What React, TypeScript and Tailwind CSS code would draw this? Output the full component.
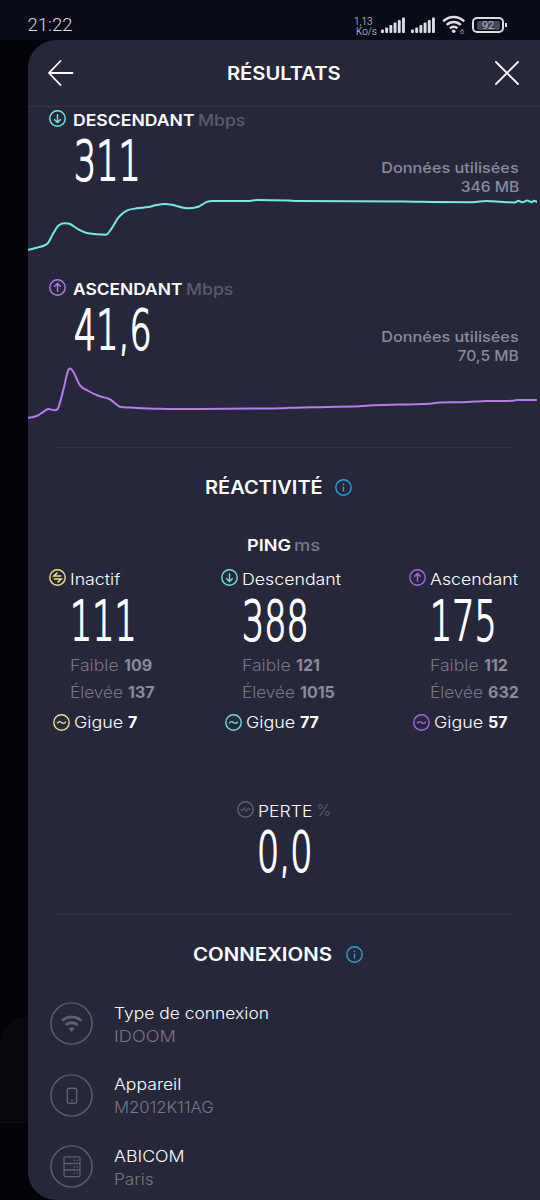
import type { ReactNode } from "react";

type Point = [number, number];

const downloadPoints: Point[] = [
  [27.7, 249.7], [36.7, 247.7], [47.3, 243.7], [53.3, 233.3], [58.3, 225.7],
  [64.3, 223.3], [70, 224], [78.3, 229.3], [88.3, 233.3], [106, 234.7],
  [111.7, 228.3], [118.3, 217.7], [126.7, 210.7], [136.7, 208.3], [148.3, 207],
  [156.7, 205], [165, 204], [171.7, 204.7], [187.3, 208.3], [198.3, 206.7],
  [206.7, 201.9], [213, 200.9], [248, 201], [257, 199.9], [288, 200.4],
  [297, 201.1], [403, 201.4], [437, 202], [473, 202.3], [486, 200.9],
  [503, 202.1], [515, 202.4], [518.3, 200.8], [522.7, 202.3], [527.3, 200.5],
  [531.7, 202.2], [534, 200.8], [537, 201.7],
];

const uploadPoints: Point[] = [
  [27.7, 417.7], [36.7, 416], [42.7, 412.3], [48.3, 409], [55, 410.3],
  [58.3, 407.7], [63.3, 390], [67.7, 371.7], [70, 368.4], [73.3, 371.7],
  [80, 385.3], [88.3, 391], [98.3, 395.7], [109.3, 399], [115, 403.3],
  [120, 406.8], [130, 407.5], [160, 408.7], [200, 409], [270, 408.4],
  [283, 408.2], [290, 407.7], [313, 407.3], [360, 406.3], [373, 405.3],
  [430, 403.7], [440, 402.5], [463, 402.2], [487, 401], [513, 400.8],
  [517, 399.9], [537, 399.9],
];

function smoothPath(points: Point[]) {
  const slope = points.map(([x, y], i) => {
    const prev = points[i - 1];
    const next = points[i + 1];
    if (!prev || !next) return 0;
    if ((y - prev[1]) * (next[1] - y) <= 0) return 0;
    return (next[1] - prev[1]) / (next[0] - prev[0]);
  });
  let d = `M${points[0][0]} ${points[0][1]}`;
  for (let i = 1; i < points.length; i++) {
    const [x0, y0] = points[i - 1];
    const [x1, y1] = points[i];
    const dx = (x1 - x0) / 3;
    d += `C${x0 + dx} ${y0 + dx * slope[i - 1]} ${x1 - dx} ${y1 - dx * slope[i]} ${x1} ${y1}`;
  }
  return d;
}

const glyphs = {
  down: <path d="M8.5 4.3v8M5.2 9.2l3.3 3.3 3.3-3.3" />,
  up: <path d="M8.5 12.7v-8M5.2 7.8l3.3-3.3 3.3 3.3" />,
  idle: <path d="M8.4 3.6L4.8 7h7.4M8.6 13.4L12.2 10H4.8" strokeWidth={1.5} />,
  jitter: <path d="M4.3 9.4c1-2.2 2.7-2.2 4.2-.9s3.2 1.3 4.2-.9" />,
  loss: <path d="M3.5 8.8h3.2l1.2-2.6M9 10.8l1.2-2.6h3.3" strokeWidth={1.3} />,
  info: <path d="M8.5 7.5v5M8.5 4.5v1.6" />,
};

function RoundIcon({ glyph, className }: { glyph: keyof typeof glyphs; className: string }) {
  return (
    <svg viewBox="0 0 17 17" fill="none" stroke="currentColor" strokeWidth={1.4} className={`h-[17px] w-[17px] shrink-0 ${className}`}>
      <circle cx="8.5" cy="8.5" r="7.7" />
      {glyphs[glyph]}
    </svg>
  );
}

// Widened lettering: className carries the horizontal scale and the width it takes up
function Wide({ className, children }: { className: string; children: ReactNode }) {
  return <span className={`inline-block origin-left whitespace-pre ${className}`}>{children}</span>;
}

function BigNumber({ children }: { children: ReactNode }) {
  return (
    <div className="origin-left scale-x-[0.623] whitespace-nowrap font-['DejaVu_Sans',sans-serif] text-[56px] font-extralight leading-[54px] [-webkit-text-stroke:1.8px_white]">
      {children}
    </div>
  );
}

function StatusBar() {
  const bars = [3.5, 5.5, 8, 10.5, 13, 15.5];
  const signal = (
    <svg viewBox="0 0 24 16" className="h-4 w-6 fill-[#dcdce2]">
      {bars.map((h, i) => (
        <rect key={i} x={i * 4.2} y={16 - h} width="2.9" height={h} rx="0.9" />
      ))}
    </svg>
  );
  return (
    <div className="flex h-10 items-start bg-[#090b19] font-['Roboto',sans-serif] text-[#dcdce2]">
      <div className="ml-[27.5px] mt-[14px] flex-1 text-[18.5px] leading-[22px]">21:22</div>
      <div className="mr-[4px] mt-[17px] w-[23px] text-[10px] leading-[9.5px]">
        <div>1,13</div>
        <div className="pl-[2px]">Ko/s</div>
      </div>
      <div className="mr-px mt-[17px] flex gap-[6px]">
        {signal}
        {signal}
      </div>
      <svg viewBox="0 0 24 20" className="ml-[6px] mt-[15px] h-5 w-6" fill="none" stroke="#dcdce2" strokeWidth={2.5}>
        <path d="M1.2 6.3a14.8 14.8 0 0 1 21 0M4.7 10a9.8 9.8 0 0 1 14 0M8 13.4a5.2 5.2 0 0 1 7.4 0" />
        <circle cx="11.7" cy="16.3" r="1.8" fill="#dcdce2" stroke="none" />
        <text x="18" y="18.8" fill="#dcdce2" stroke="none" className="text-[8px]">6</text>
      </svg>
      <div className="ml-[6px] mt-[17px] flex h-[16px] w-[32px] items-center justify-center rounded-[5px] border-2 border-[#dcdce2]">
        <div className="flex h-[9px] w-[23px] items-center justify-center rounded-[2px] bg-[#46485a] text-[11px] leading-[11px]">92</div>
      </div>
      <div className="ml-px mr-[33px] mt-[23px] h-1 w-[2px] bg-[#dcdce2]" />
    </div>
  );
}

type SpeedProps = {
  glyph: "down" | "up";
  color: string;
  label: ReactNode;
  value: string;
  data: string;
  points: Point[];
  viewBox: string;
};

function SpeedSection({ glyph, color, label, value, data, points, viewBox }: SpeedProps) {
  return (
    <section className={color}>
      <div className="flex h-[27px] items-center pb-px pl-[21px]">
        <RoundIcon glyph={glyph} className="-mt-[3px] mr-[6.5px]" />
        {label}
        <Wide className="w-[46px] scale-x-[1.1] font-medium text-[#5b5c6d]">Mbps</Wide>
      </div>
      <div className="flex h-[62px] justify-between pl-[45.5px] pr-[21px] text-white">
        <BigNumber>{value}</BigNumber>
        <div className="flex flex-col items-end self-end text-[14.5px] font-medium leading-[18.5px] text-[#8a8b9e]">
          <span className="origin-right scale-x-[1.12]">Données utilisées</span>
          <span className="origin-right scale-x-[1.08]">{data}</span>
        </div>
      </div>
      <svg viewBox={viewBox} className="block h-[60px] w-[512px]" fill="none" stroke="currentColor" strokeWidth={2} strokeLinejoin="round">
        <path d={smoothPath(points)} />
      </svg>
    </section>
  );
}

type PingProps = {
  glyph: "idle" | "down" | "up";
  color: string;
  label: string;
  value: string;
  low: string;
  high: string;
  jitter: string;
};

function PingColumn({ glyph, color, label, value, low, high, jitter }: PingProps) {
  return (
    <div>
      <div className="flex h-[30px] items-center">
        <RoundIcon glyph={glyph} className={`-mt-1 mr-[4px] ${color}`} />
        <Wide className="scale-x-[1.11]">{label}</Wide>
      </div>
      <div className="ml-[21px] h-[58px] w-20">
        <BigNumber>{value}</BigNumber>
      </div>
      <div className="ml-[21px] leading-[27px] text-[#77788b]">
        <div className="flex">
          <Wide className="w-[54px] scale-x-[1.1]">Faible </Wide>
          <b className="text-[#8a8b9e]">{low}</b>
        </div>
        <div className="flex">
          <Wide className="w-[58px] scale-x-[1.07]">Élevée </Wide>
          <b className="text-[#8a8b9e]">{high}</b>
        </div>
      </div>
      <div className="flex h-8 items-center pl-[4px]">
        <RoundIcon glyph="jitter" className={`mr-[3.5px] ${color}`} />
        <Wide className="w-[54.5px] scale-x-[1.12]">Gigue </Wide>
        <b>{jitter}</b>
      </div>
    </div>
  );
}

type ConnectionProps = { icon: ReactNode; title: string; detail: string; titleScale: string; detailScale: string };

function Connection({ icon, title, detail, titleScale, detailScale }: ConnectionProps) {
  return (
    <div className="flex h-[71.5px] items-center pl-[22px]">
      <svg viewBox="0 0 43 43" className="h-[43px] w-[43px] text-[#5f6073]" fill="none" stroke="currentColor" strokeWidth={1.4}>
        <circle cx="21.5" cy="21.5" r="20.6" />
        {icon}
      </svg>
      <div className="ml-[21px] flex flex-col items-start pt-[2px] leading-[23px]">
        <Wide className={titleScale}>{title}</Wide>
        <Wide className={`text-[#77788b] ${detailScale}`}>{detail}</Wide>
      </div>
    </div>
  );
}

export default function App() {
  return (
    <div className="h-[1200px] w-[540px] overflow-hidden bg-[#020308] font-['Inter',sans-serif] text-base font-[350] text-white">
      <StatusBar />
      <div className="flex h-[1160px]">
        <div className="w-[28px] shrink-0 overflow-hidden pl-px pt-[976px]">
          <div className="h-[107px] w-20 rounded-tl-[28px] border border-[#0d0e15] bg-[#07080e]" />
        </div>
        <main className="w-[512px] overflow-hidden rounded-l-[28px] bg-[#26273a]">
          <header className="flex h-[67px] items-center border-b border-[#32334a] pl-[20px] pr-[21px]">
            <svg viewBox="0 0 26 26" className="h-[26px] w-[26px]" fill="none" stroke="white" strokeWidth={1.8} strokeLinecap="round">
              <path d="M12.5 1L1 13l11.5 12M1 13h23.5" />
            </svg>
            <h1 className="flex-1 pr-[2px] text-center text-[18px] font-semibold">
              <span className="inline-block scale-x-[1.12]">RÉSULTATS</span>
            </h1>
            <svg viewBox="0 0 24 24" className="h-6 w-6" fill="none" stroke="white" strokeWidth={1.8} strokeLinecap="round">
              <path d="M1 1l22 22M23 1L1 23" />
            </svg>
          </header>

          <SpeedSection
            glyph="down"
            color="text-[#72ebe6]"
            label={<Wide className="w-[125px] scale-x-[1.1] font-semibold text-white">DESCENDANT</Wide>}
            value="311"
            data="346 MB"
            points={downloadPoints}
            viewBox="28 196 512 60"
          />
          <div className="h-5" />
          <SpeedSection
            glyph="up"
            color="text-[#b87cf0]"
            label={<Wide className="w-[113px] scale-x-[1.085] font-semibold text-white">ASCENDANT</Wide>}
            value="41,6"
            data="70,5 MB"
            points={uploadPoints}
            viewBox="28 365 512 60"
          />

          <hr className="ml-[26px] mr-[28px] mt-[22px] border-[#303146]" />
          <h2 className="flex h-[79px] items-center pl-[176.5px] text-[18px] font-semibold">
            <Wide className="w-[130.5px] scale-x-[1.11]">RÉACTIVITÉ</Wide>
            <RoundIcon glyph="info" className="text-[#2fa0dc]" />
          </h2>
          <div className="flex h-[37px] items-center pb-[2px] pl-[219px]">
            <Wide className="w-[46.5px] scale-x-[1.13] font-semibold">PING</Wide>
            <Wide className="scale-x-[1.15] font-medium text-[#77788b]">ms</Wide>
          </div>
          <div className="grid grid-cols-[172px_188px_1fr] pl-[21px]">
            <PingColumn glyph="idle" color="text-[#eee087]" label="Inactif" value="111" low="109" high="137" jitter="7" />
            <PingColumn glyph="down" color="text-[#66e3de]" label="Descendant" value="388" low="121" high="1015" jitter="77" />
            <PingColumn glyph="up" color="text-[#a868dd]" label="Ascendant" value="175" low="112" high="632" jitter="57" />
          </div>

          <div className="mt-[57px] pl-[209px]">
            <div className="flex h-8 items-center">
              <RoundIcon glyph="loss" className="-mt-1 mr-[3.5px] text-[#5f6073]" />
              <Wide className="w-[59px] scale-x-[1.1]">PERTE</Wide>
              <span className="text-[15.5px] text-[#5f6073]">%</span>
            </div>
            <div className="-mt-[2px] ml-[20px] h-[51px] w-20">
              <BigNumber>0,0</BigNumber>
            </div>
          </div>

          <hr className="ml-[26px] mr-[28px] mt-[38px] border-[#303146]" />
          <h2 className="flex h-[73px] items-center pl-[165px] pt-[6px] text-[18px] font-semibold">
            <Wide className="w-[153px] scale-x-[1.135]">CONNEXIONS</Wide>
            <RoundIcon glyph="info" className="text-[#2fa0dc]" />
          </h2>
          <Connection
            title="Type de connexion"
            titleScale="scale-x-[1.09]"
            detail="IDOOM"
            detailScale="scale-x-[1.14]"
            icon={
              <g strokeWidth={2.8}>
                <path d="M12 18.7a14 14 0 0 1 19.4 0M15.7 23.1a8.8 8.8 0 0 1 12 0" />
                <path d="M21.7 29.8l-3.2-3.3a4.6 4.6 0 0 1 6.4 0z" fill="currentColor" stroke="none" />
              </g>
            }
          />
          <Connection
            title="Appareil"
            titleScale="scale-x-[1.1]"
            detail="M2012K11AG"
            detailScale="scale-x-[1.045]"
            icon={
              <g>
                <rect x="17.3" y="14.2" width="9.4" height="15" rx="2" />
                <path d="M21 26.5h2" />
              </g>
            }
          />
          <Connection
            title="ABICOM"
            titleScale="scale-x-[1.11]"
            detail="Paris"
            detailScale="scale-x-[1.08]"
            icon={
              <g strokeWidth={1.3}>
                <rect x="14" y="11.8" width="16" height="19.8" rx="1.5" />
                <path d="M14 18.5h16M14 25h16M23.5 15.3H25M26.5 15.3H28M23.5 21.8H25M26.5 21.8H28M23.5 28.3H25M26.5 28.3H28" />
              </g>
            }
          />
        </main>
      </div>
    </div>
  );
}
